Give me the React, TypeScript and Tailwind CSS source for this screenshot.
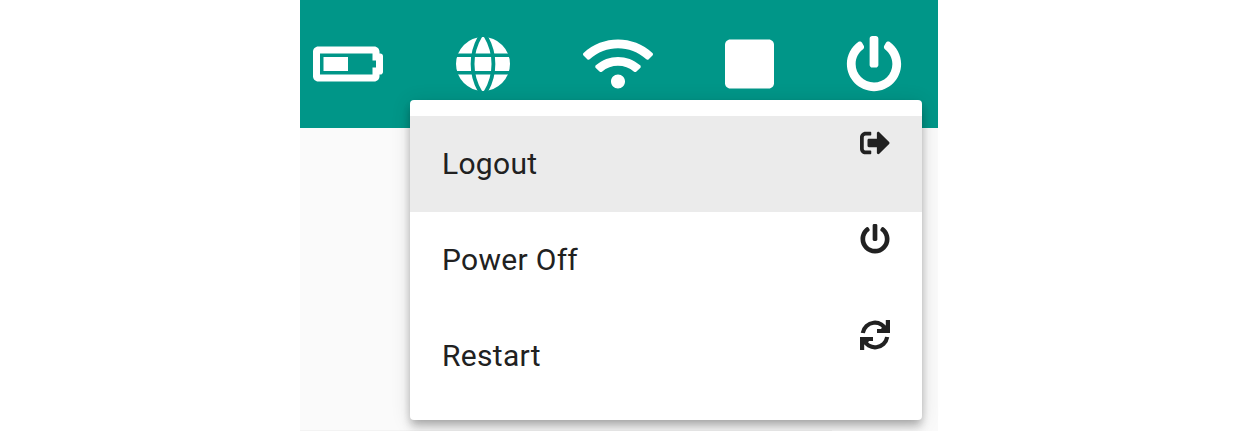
import React from "react";
import { FaBatteryHalf, FaWifi, FaSquare, FaPowerOff, FaSignOutAlt } from "react-icons/fa";

function Globe({ className }: { className?: string }) {
  return (
    <svg viewBox="0 0 54 54" className={className} aria-hidden="true">
      <circle cx="27" cy="27" r="27" fill="currentColor" />
      <g fill="none" stroke="#009688" strokeWidth="3.5">
        <path d="M0 18.3H54M0 35.8H54" />
        <path strokeWidth="3.8" d="M24.4 -1A54 54 0 0 0 24.4 55M29.6 -1A54 54 0 0 1 29.6 55" />
      </g>
    </svg>
  );
}

function Refresh({ className }: { className?: string }) {
  return (
    <svg viewBox="0 0 30 30" className={className} aria-hidden="true" fill="none" stroke="currentColor" strokeWidth="4.2">
      <path d="M2.8 13A12.4 12.4 0 0 1 26.5 10.4" />
      <path d="M27.9 0V11H17" />
      <path d="M27.2 17A12.4 12.4 0 0 1 3.5 19.6" />
      <path d="M2.1 30V19H13" />
      <path fill="currentColor" stroke="none" d="M21 9.2L22.5 6H26.2V9.2ZM9 20.8L7.5 24H3.8V20.8Z" />
    </svg>
  );
}

const items = [
  { label: "Logout", Icon: FaSignOutAlt, active: true },
  { label: "Power Off", Icon: FaPowerOff, active: false },
  { label: "Restart", Icon: Refresh, active: false },
];

export default function App() {
  return (
    <div className="h-[431px] w-[1238px] overflow-hidden bg-white">
      <div className="relative ml-[300px] flex h-[431px] w-[638px] flex-col bg-[#fafafa]">
        <header className="flex h-32 items-center bg-[#009688] pl-[13px] text-white">
          <FaBatteryHalf className="h-14 w-[70px]" />
          <Globe className="ml-[73px] h-[54px] w-[54px]" />
          <FaWifi className="ml-[73px] h-14 w-[70px]" />
          <FaSquare className="ml-[72px] h-14 w-[49px]" />
          <FaPowerOff className="ml-[72px] h-14 w-14" />
        </header>
        <div className="mt-auto h-px w-[532px] bg-[#f3f3f3]" />
        <div
          role="menu"
          className="absolute top-[100px] left-[110px] h-80 w-[512px] rounded bg-white py-4 font-['Roboto',sans-serif] shadow-[0_4px_8px_-2px_rgba(0,0,0,0.2),0_8px_10px_0_rgba(0,0,0,0.14),0_2px_20px_0_rgba(0,0,0,0.12)]"
        >
          {items.map(({ label, Icon, active }) => (
            <div
              key={label}
              role="menuitem"
              className={
                "flex h-24 justify-between px-8 text-[30px] leading-[96px] tracking-[0.3px] text-[#212121] " +
                (active ? "bg-[#ebebeb]" : "bg-white")
              }
            >
              <span>{label}</span>
              <Icon className="mt-3 h-[30px] w-[30px]" />
            </div>
          ))}
        </div>
      </div>
    </div>
  );
}
